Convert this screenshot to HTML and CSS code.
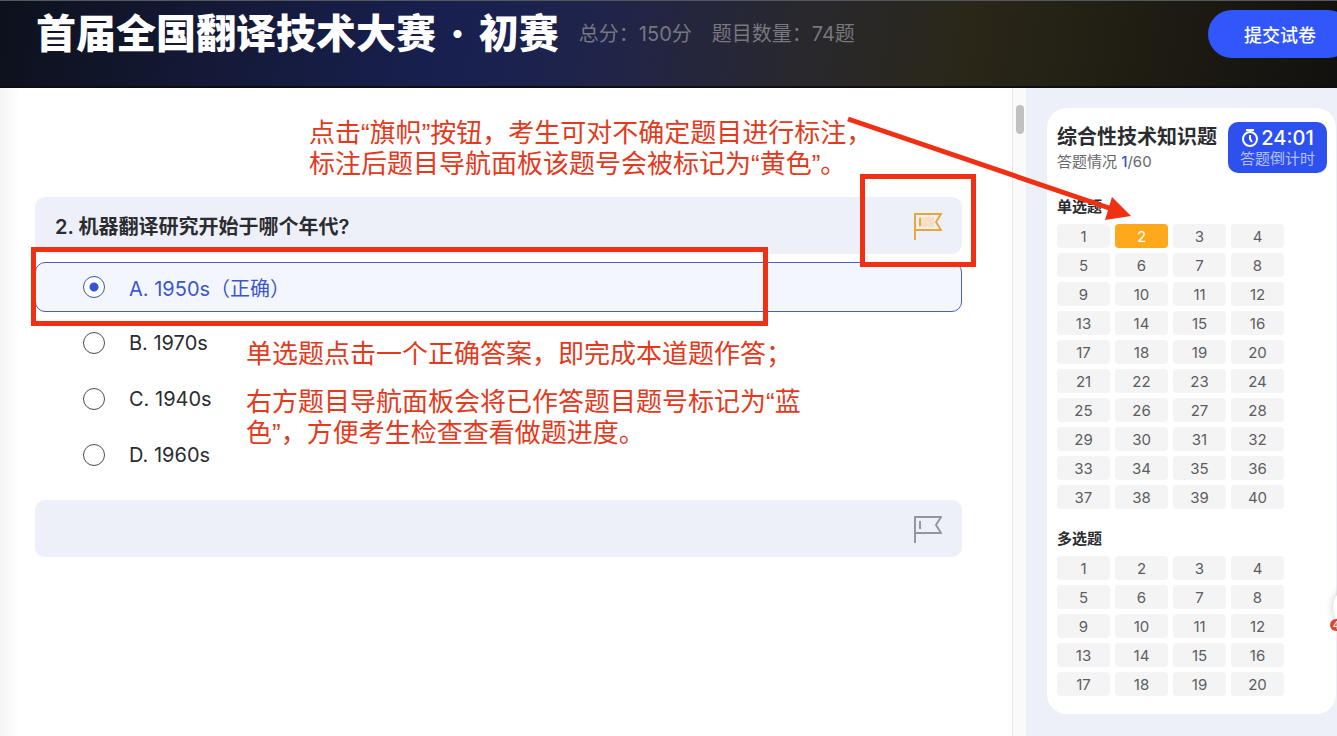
FILE: index.html
```
<!DOCTYPE html>
<html lang="zh-CN">
<head>
    <meta charset="UTF-8">
    <meta name="viewport" content="width=device-width, initial-scale=1.0">
    <title>首届全国翻译技术大赛 · 初赛</title>
    <link rel="stylesheet" href="styles.css">
</head>
<body>

    <header class="header">
        <h1>首届全国翻译技术大赛<span class="dot"> · </span>初赛</h1>
        <div class="info">
            <span>总分：150分</span>
            <span>题目数量：74题</span>
        </div>
        <button type="button" class="submit">提交试卷</button>
    </header>

    <div class="exam">
        <main class="questions">
            <p class="note note-top">点击“旗帜”按钮，考生可对不确定题目进行标注，<br>标注后题目导航面板该题号会被标记为“黄色”。</p>

            <section class="question">
                <div class="question-head">
                    <h2>2. 机器翻译研究开始于哪个年代?</h2>
                    <button type="button" class="flag flagged" aria-label="标注">
                        <svg width="30" height="30" viewBox="0 0 30 30">
                            <rect class="flag-fill" x="7" y="6" width="15" height="10"/>
                            <path d="M3 29V3H29L24 11L29 19H3M8 7V15"/>
                        </svg>
                    </button>
                </div>
                <div class="options">
                    <label class="option selected"><input type="radio" name="q2" checked><span>A. 1950s（正确）</span></label>
                    <label class="option"><input type="radio" name="q2"><span>B. 1970s</span></label>
                    <label class="option"><input type="radio" name="q2"><span>C. 1940s</span></label>
                    <label class="option"><input type="radio" name="q2"><span>D. 1960s</span></label>
                </div>
                <div class="note note-option">
                    <p>单选题点击一个正确答案，即完成本道题作答；</p>
                    <p>右方题目导航面板会将已作答题目题号标记为“蓝<br>色”，方便考生检查查看做题进度。</p>
                </div>
                <div class="mark mark-answer"></div>
                <div class="mark mark-flag"></div>
            </section>

            <section class="question">
                <div class="question-head">
                    <button type="button" class="flag" aria-label="标注">
                        <svg width="30" height="30" viewBox="0 0 30 30">
                            <path d="M3 29V3H29L24 11L29 19H3M8 7V15"/>
                        </svg>
                    </button>
                </div>
            </section>
        </main>

        <div class="scrollbar"><div class="thumb"></div></div>

        <aside class="sidebar">
            <div class="panel">
                <div class="panel-head">
                    <div>
                        <h2>综合性技术知识题</h2>
                        <p class="status">答题情况 <b>1</b>/60</p>
                    </div>
                    <div class="timer">
                        <div class="time">
                            <svg width="18" height="20" viewBox="0 0 18 20">
                                <circle cx="9" cy="11" r="7"/>
                                <path d="M5 2H13M9 2V4M9 7V11L11 14"/>
                            </svg>
                            <span>24:01</span>
                        </div>
                        <div class="time-label">答题倒计时</div>
                    </div>
                </div>
                <h3>单选题</h3>
                <div class="numbers" data-count="40" data-flagged="2"></div>
                <h3>多选题</h3>
                <div class="numbers" data-count="20"></div>
            </div>
        </aside>

        <svg class="arrow" width="286" height="106" viewBox="0 0 286 106">
            <path class="arrow-line" d="M2 3L266 93"/>
            <path class="arrow-tip" d="M285 100L259 104L266 81Z"/>
        </svg>

        <button type="button" class="float" aria-label="消息"><span>4</span></button>
    </div>

    <script>
        // Genera los botones de cada grupo
        document.querySelectorAll('.numbers').forEach(grupo => {
            for (let i = 1; i <= Number(grupo.dataset.count); i++) {
                const boton = document.createElement('button');
                boton.type = 'button';
                boton.textContent = i;
                if (i === Number(grupo.dataset.flagged)) {
                    boton.classList.add('flagged');
                }
                grupo.appendChild(boton);
            }
        });
    </script>

</body>
</html>
```

FILE: styles.css
```
* {
    box-sizing: border-box;
}
body {
    margin: 0;
    min-height: 100vh;
    display: flex;
    flex-direction: column;
    overflow-x: hidden;
    font-family: Inter, "Noto Sans CJK SC", sans-serif;
    color: #2b2c30;
    background: #fff;
}
h1, h2, h3, p {
    margin: 0;
}
button {
    font-family: inherit;
    padding: 0;
    border: none;
    cursor: pointer;
}
.header {
    display: flex;
    align-items: flex-start;
    height: 88px;
    padding: 9px 0 0 36px;
    border-top: 1px solid #55575f;
    border-bottom: 2px solid #0e0e12;
    background: linear-gradient(100deg, #0d111c 0%, #151a3a 18%, #182050 34%, #20244a 45%, #29282d 60%, #2a2719 72%, #201d13 84%, #12110f 100%);
    overflow: hidden;
}
.header h1 {
    font-size: 40px;
    line-height: 48px;
    font-weight: 900;
    color: #fff;
    white-space: nowrap;
}
.dot {
    padding: 0 6px;
}
.info {
    display: flex;
    gap: 20px;
    margin-left: 20px;
    font-size: 20px;
    line-height: 48px;
    color: #77777e;
    white-space: nowrap;
}
.submit {
    flex: none;
    width: 144px;
    height: 48px;
    margin-left: auto;
    margin-right: -15px;
    border-radius: 24px;
    background: #3157fb;
    color: #fff;
    font-size: 18px;
    font-weight: 500;
}
.exam {
    position: relative;
    flex: 1;
    display: flex;
    overflow: hidden;
}
.questions {
    flex: 1;
    padding: 30px 50px 20px 35px;
    background: linear-gradient(90deg, #f5f5f5 0, #fff 20px);
}
.note {
    font-family: "Liberation Sans", "Noto Sans CJK SC", sans-serif;
    font-size: 26px;
    line-height: 31px;
    color: #e23a1c;
    white-space: nowrap;
}
.note-top {
    padding-left: 274px;
    margin-bottom: 17px;
}
.question {
    position: relative;
    margin-bottom: 20px;
}
.question-head {
    display: flex;
    align-items: center;
    height: 57px;
    padding: 0 20px;
    border-radius: 10px;
    background: #eef0f9;
}
.question-head h2 {
    font-size: 20px;
    font-weight: 600;
}
.flag {
    width: 30px;
    height: 30px;
    margin-left: auto;
    background: none;
}
.flag svg {
    display: block;
    fill: none;
    stroke: #96979d;
    stroke-width: 2;
}
.flag.flagged svg {
    stroke: #e8a838;
}
.flag .flag-fill {
    fill: #f6dfc5;
    stroke: none;
}
.options {
    display: flex;
    flex-direction: column;
    gap: 6px;
    margin-top: 8px;
}
.option {
    display: flex;
    align-items: center;
    gap: 24px;
    height: 50px;
    padding-left: 47px;
    border: 1px solid transparent;
    border-radius: 10px;
    font-size: 20px;
}
.option.selected {
    border-color: #4a62b4;
    background: #f4f6fe;
    color: #3c57c8;
}
.option input {
    appearance: none;
    width: 22px;
    height: 22px;
    margin: 0;
    border: 1px solid #4b4c52;
    border-radius: 50%;
    background: #fff;
}
.option input:checked {
    border-color: #3c57a8;
    background: radial-gradient(circle, #3654d0 4px, #fff 5px);
}
.note-option {
    position: absolute;
    left: 211px;
    top: 142px;
}
.note-option p + p {
    margin-top: 17px;
}
.mark {
    position: absolute;
    border: 5px solid #f03013;
    pointer-events: none;
}
.mark-answer {
    left: -4px;
    right: 194px;
    top: 50px;
    height: 79px;
}
.mark-flag {
    right: -14px;
    top: -23px;
    width: 116px;
    height: 93px;
}
.scrollbar {
    width: 14px;
    padding: 17px 2px 0 3px;
    border-left: 1px solid #e6e6e8;
    background: #fafafa;
}
.thumb {
    width: 8px;
    height: 29px;
    border-radius: 4px;
    background: #c1c1c1;
}
.sidebar {
    width: 311px;
    padding: 20px 1px 20px 21px;
    background: #eef0f9;
}
.panel {
    padding: 15px 9px 18px 10px;
    border-radius: 20px;
    background: #fff;
}
.panel-head {
    display: flex;
    justify-content: space-between;
    margin-bottom: 23px;
}
.panel-head h2 {
    font-size: 20px;
    line-height: 28px;
    font-weight: 600;
    white-space: nowrap;
}
.status {
    font-size: 15px;
    line-height: 22px;
    color: #66676c;
}
.status b {
    font-weight: 500;
    color: #3654d0;
}
.timer {
    width: 99px;
    height: 51px;
    margin-top: -1px;
    padding-top: 4px;
    border-radius: 10px;
    background: #2e50ee;
    color: #fff;
    text-align: center;
}
.time {
    display: flex;
    align-items: center;
    justify-content: center;
    gap: 2px;
    font-size: 20px;
    line-height: 24px;
    font-weight: 500;
}
.time svg {
    fill: none;
    stroke: #fff;
    stroke-width: 2;
}
.time-label {
    font-size: 15px;
    line-height: 18px;
    color: #b3c1fa;
}
.panel h3 {
    margin-bottom: 6px;
    font-size: 15px;
    line-height: 22px;
    font-weight: 600;
}
.numbers {
    display: grid;
    grid-template-columns: repeat(4, 53px);
    gap: 5px;
}
.numbers + h3 {
    margin-top: 19px;
}
.numbers button {
    height: 24px;
    border-radius: 4px;
    background: #f4f4f5;
    color: #5c5d61;
    font-size: 15px;
}
.numbers .flagged {
    background: #fda91b;
    color: #fff;
}
.arrow {
    position: absolute;
    top: 28px;
    right: 205px;
    pointer-events: none;
}
.arrow-line {
    fill: none;
    stroke: #f03013;
    stroke-width: 5;
}
.arrow-tip {
    fill: #f03013;
}
.float {
    position: absolute;
    top: 499px;
    right: -36px;
    width: 40px;
    height: 40px;
    border-radius: 50%;
    background: #fff;
    box-shadow: 0 0 8px rgba(0, 0, 0, 0.2);
}
.float span {
    position: absolute;
    left: -3px;
    bottom: -4px;
    width: 12px;
    height: 12px;
    border-radius: 50%;
    background: #d94a24;
    color: #fff;
    font-size: 10px;
    line-height: 12px;
}
```
